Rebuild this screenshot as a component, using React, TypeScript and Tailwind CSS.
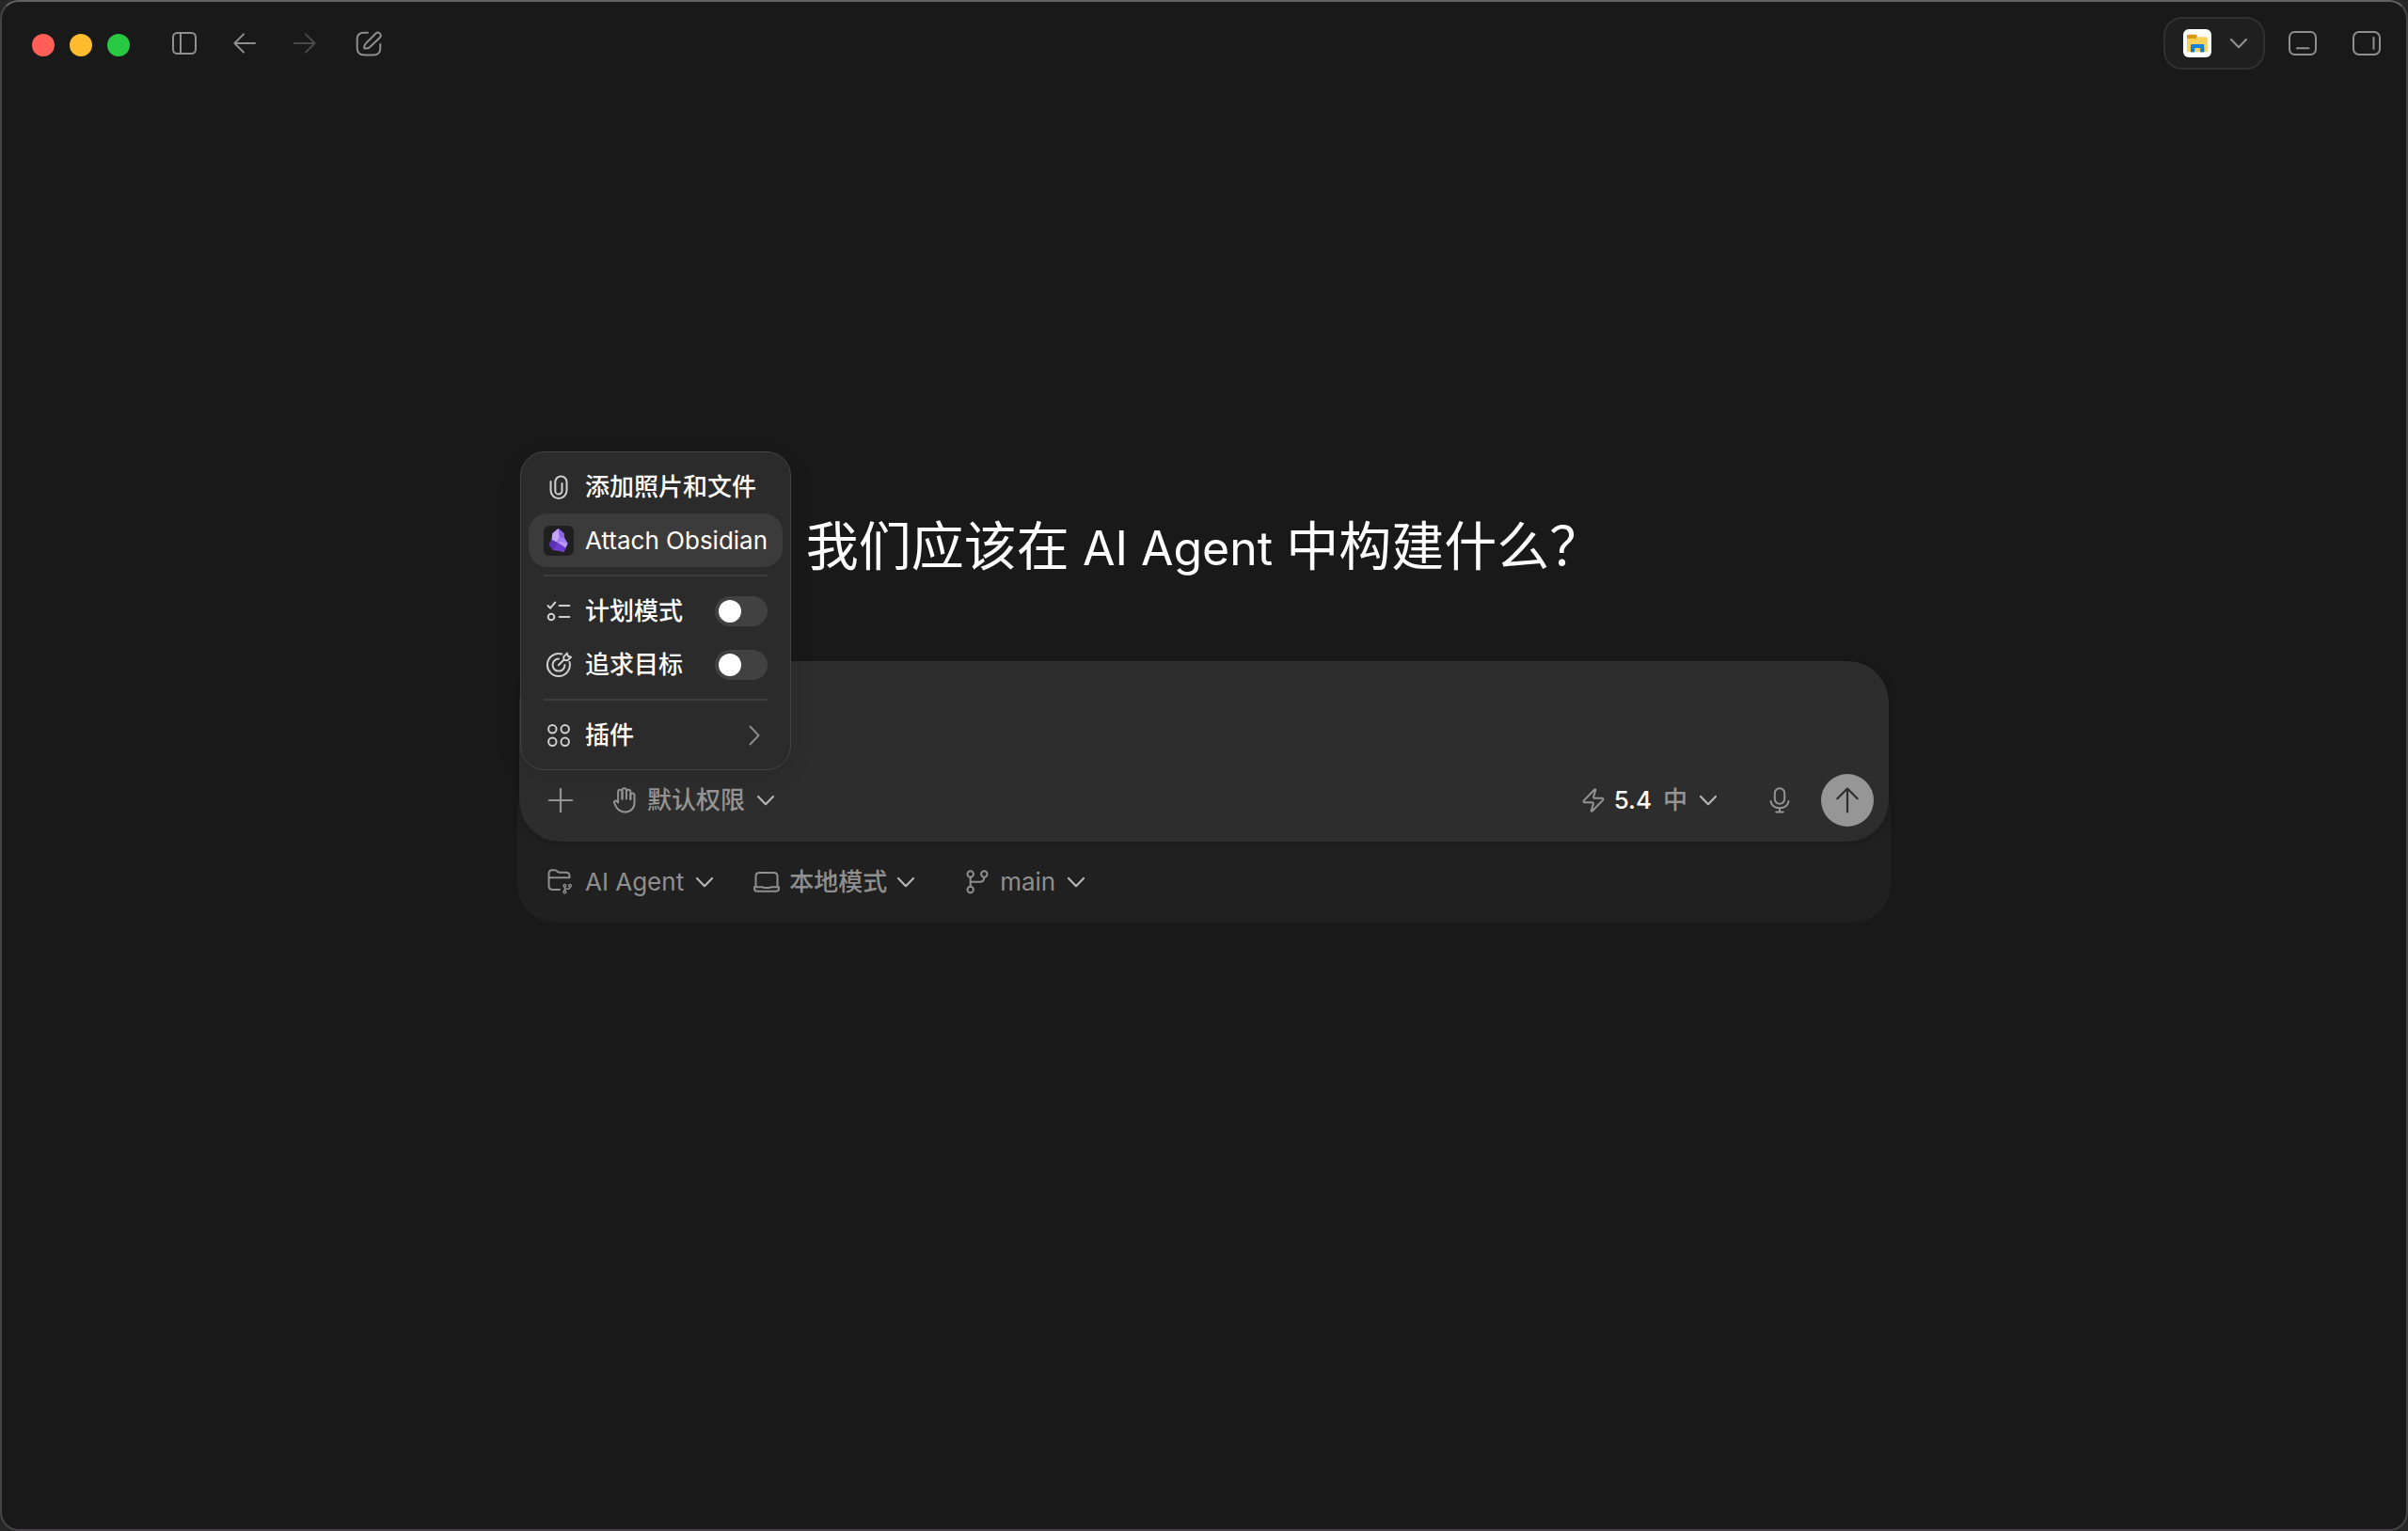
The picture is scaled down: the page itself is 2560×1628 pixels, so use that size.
import { useState } from "react";
import type { ReactNode } from "react";
import clsx from "clsx";
import { Zap } from "lucide-react";

type IconProps = {
  w: number;
  h: number;
  className?: string;
  children: ReactNode;
};

function Icon({ w, h, className, children }: IconProps) {
  return (
    <svg
      width={w}
      height={h}
      viewBox={`0 0 ${w} ${h}`}
      fill="none"
      stroke="currentColor"
      strokeWidth={2}
      strokeLinecap="round"
      strokeLinejoin="round"
      aria-hidden="true"
      className={clsx("shrink-0", className)}
    >
      {children}
    </svg>
  );
}

const ChevronDown = ({ className }: { className?: string }) => (
  <Icon w={20} h={12} className={className}>
    <path d="M2 2 10 10.2 18 2" strokeWidth={2.2} />
  </Icon>
);

const SidebarIcon = () => (
  <Icon w={26} h={24}>
    <rect x="1" y="1" width="24" height="22" rx="4.5" />
    <path d="M9 1v22" />
  </Icon>
);

const BackIcon = () => (
  <Icon w={24} h={22}>
    <path d="M23 11H1.4M11 1.4 1.4 11l9.6 9.6" />
  </Icon>
);

const ForwardIcon = () => (
  <Icon w={24} h={22}>
    <path d="M1 11h21.6M13 1.4l9.6 9.6-9.6 9.6" />
  </Icon>
);

const ComposeIcon = () => (
  <Icon w={28} h={28}>
    <path d="M13 2.8H9c-5 0-7.3 2.3-7.3 6.6v9.4c0 5.4 2.4 7.7 7.6 7.7h9.4c5.3 0 7.6-2.4 7.6-7.6V15" />
    <path d="M9.3 19.4c-.3-2 .3-3.9 1.7-5.3L21.3 3.7a3.1 3.1 0 0 1 4.5 4.3L15.3 18c-1.7 1.5-3.8 1.9-6 1.4Z" />
  </Icon>
);

const BottomPanelIcon = () => (
  <Icon w={30} h={26}>
    <rect x="1" y="1" width="28" height="24" rx="5.5" />
    <path d="M9 18.3h12.5" />
  </Icon>
);

const RightPanelIcon = () => (
  <Icon w={30} h={26}>
    <rect x="1" y="1" width="28" height="24" rx="6" />
    <path d="M22.5 7v12" />
  </Icon>
);

const ExplorerIcon = () => (
  <svg width="30" height="30" viewBox="0 0 30 30" aria-hidden="true">
    <rect width="30" height="30" rx="6" fill="#fff" />
    <path d="M4.5 8.2h20a1.3 1.3 0 0 1 1.3 1.3v14.7H4V8.7z" fill="#fdd05a" />
    <path d="M5 5.8h8.7l1.4 1.6-1.4 2.6H4V6.8a1 1 0 0 1 1-1Z" fill="#db9a10" />
    <path d="M8 17a1 1 0 0 1 1-1h12.2a1 1 0 0 1 1 1v7.2h-4V21a1 1 0 0 0-1-1h-4a1 1 0 0 0-1 1v3.2H8Z" fill="#1583dc" />
    <path d="M8 24.2V20l4.2 4.2ZM22.2 24.2V20l-4 4.2Z" fill="#0f6cc0" />
  </svg>
);

const PaperclipIcon = () => (
  <Icon w={20} h={26}>
    <path d="M1.5 7v9.5a8.5 8.5 0 0 0 17 0v-9a6.1 6.1 0 0 0-12.2 0V17a3.6 3.6 0 0 0 7.2 0V9" />
  </Icon>
);

const ObsidianIcon = () => (
  <svg width="32" height="32" viewBox="0 0 32 32" aria-hidden="true" className="shrink-0">
    <rect width="32" height="32" rx="6" fill="#1f1f20" />
    <path d="M15.5 3 9 8.3 8.6 14.5 5.5 20l4.5 6 5.5.4 6 1.5 2-4.5L25.6 19l-3.3-5.5-.6-5.5Z" fill="#7c4bdc" />
    <path d="m15.5 3-6.3 5.5-.7 8.5 5.5.5 3-5.5Z" fill="#c3a6f5" />
    <path d="m16 3 5.6 5.3.6 5.2 3.4 5.5-6.6-2.5-2-4.5Z" fill="#8f62ea" />
    <path d="m17 12-3 5.5 5-1 6.6 2.5-3.3-5.5Z" fill="#a47df2" />
    <path d="M8.5 14.8 5.5 20l4.5 6 3-3.5 1-5Z" fill="#5a32ad" />
    <path d="m14 17.5-1 5L10 26l5.5.4 6 1.5 2-4.5Z" fill="#6c3ccf" />
    <path d="m19 16.5-5 1 9.5 6 2.1-4.5Z" fill="#b896f6" />
  </svg>
);

const PlanIcon = () => (
  <Icon w={26} h={22}>
    <path d="m1.5 5 2.6 2.7 5.2-6.2M13.7 5h10.6M13.7 17h10.6" />
    <circle cx="5" cy="17" r="3.3" />
  </Icon>
);

const GoalIcon = () => (
  <Icon w={28} h={28}>
    <path d="M17.2 2.5A12 12 0 1 0 25.5 11" />
    <path d="M14 7.6a6.5 6.5 0 1 0 6.5 6.5" />
    <path d="m13.8 14.2 5.5-5.5M19.3 8.7V5.4l3.6-3.8.9 3.2 3.2.9-3.7 3.6Z" />
  </Icon>
);

const PluginsIcon = () => (
  <Icon w={24} h={24}>
    <circle cx="5.3" cy="5.3" r="4.2" />
    <circle cx="18.7" cy="5.3" r="4.2" />
    <circle cx="5.3" cy="18.7" r="4.2" />
    <circle cx="18.7" cy="18.7" r="4.2" />
  </Icon>
);

const ChevronRight = () => (
  <Icon w={12} h={22} className="text-[#8b8b8b]">
    <path d="m1.5 1.5 9 9.5-9 9.5" />
  </Icon>
);

const PlusIcon = () => (
  <Icon w={26} h={26}>
    <path d="M13 1v24M1 13h24" strokeWidth={2.2} />
  </Icon>
);

const HandIcon = () => (
  <Icon w={24} h={28}>
    <path d="M9.5 12.5V5a2.2 2.2 0 0 0-4.4 0v11.5l-.7-1C3 13.6.3 14.8 1.2 17.2c1.9 5 4.6 9.3 10.8 9.3 6.6 0 10.5-4.1 10.5-10V8.7a2.1 2.1 0 0 0-4.2 0V13" />
    <path d="M9.5 12.5V3.4a2.2 2.2 0 0 1 4.4 0v9.1M13.9 5a2.2 2.2 0 0 1 4.4 0v8" />
  </Icon>
);

const MicIcon = () => (
  <Icon w={22} h={28}>
    <rect x="5.8" y="1.3" width="10.4" height="16.4" rx="5.2" />
    <path d="M1.5 15C2.5 19.7 6.2 22.2 11 22.2s8.5-2.5 9.5-7.2M11 22.2v4M7.2 26.4h7.6" />
  </Icon>
);

const SendIcon = () => (
  <Icon w={24} h={28}>
    <path d="M12 26.5v-25M1.3 12.2 12 1.5l10.7 10.7" strokeWidth={2.2} />
  </Icon>
);

const ProjectIcon = () => (
  <Icon w={28} h={28}>
    <path d="M13 22H5.5c-3 0-4-1.2-4-4V5c0-2.5 1.2-3.7 3.6-3.7h2.5c1.5 0 2.2.6 3.1 1.5.7.7 1.4 1 2.5 1h6.3c2.7 0 4 1.3 4 3.8v1.7h-22" />
    <g strokeWidth={1.4}>
      <circle cx="18.4" cy="17.8" r="1.4" />
      <circle cx="24" cy="17.8" r="1.4" />
      <circle cx="18.4" cy="24.4" r="1.4" />
      <path d="M18.4 19.2V23M24 19.2c0 1.6-.7 2-2.2 2h-3.4" />
    </g>
  </Icon>
);

const LaptopIcon = () => (
  <Icon w={28} h={22}>
    <path d="M2.5 16V5c0-2.7 1.2-4 4-4h15c2.8 0 4 1.3 4 4v11" />
    <path d="M1 16.2h8.5c.8 0 1 .9 2 .9h5c1 0 1.2-.9 2-.9H27v1.6c0 2-.9 3-3 3H4c-2.1 0-3-1-3-3Z" />
  </Icon>
);

const BranchIcon = () => (
  <Icon w={24} h={26}>
    <circle cx="4.7" cy="4.5" r="3.2" />
    <circle cx="19.3" cy="4.5" r="3.2" />
    <circle cx="4.7" cy="21" r="3.2" />
    <path d="M4.7 7.7v10M19.3 7.7c0 3.5-1.5 5-4.5 5H4.7" />
  </Icon>
);

function TitleBar() {
  return (
    <header className="flex h-[88px] shrink-0 items-center justify-between pl-8 pr-[27px] text-[#8f8f8f]">
      <div className="flex items-center">
        <div className="flex gap-4 pt-1">
          <button type="button" aria-label="关闭" className="size-6 rounded-full bg-[#ff5f57]" />
          <button type="button" aria-label="最小化" className="size-6 rounded-full bg-[#febc2e]" />
          <button type="button" aria-label="缩放" className="size-6 rounded-full bg-[#28c840]" />
        </div>
        <nav className="ml-[26px] flex items-center">
          <button type="button" aria-label="侧边栏" className="flex size-16 items-center justify-center">
            <SidebarIcon />
          </button>
          <button type="button" aria-label="后退" className="flex size-16 items-center justify-center">
            <BackIcon />
          </button>
          <button type="button" aria-label="前进" className="flex size-16 items-center justify-center text-[#4a4a4a]">
            <ForwardIcon />
          </button>
          <button type="button" aria-label="新建" className="ml-1 flex size-16 items-center justify-center">
            <ComposeIcon />
          </button>
        </nav>
      </div>

      <div className="flex items-center">
        <button
          type="button"
          aria-label="打开方式"
          className="flex h-14 items-center gap-[19px] rounded-[20px] border-2 border-[#303030] bg-[#1f1f1f] pl-[19px] pr-4"
        >
          <ExplorerIcon />
          <ChevronDown />
        </button>
        <button type="button" aria-label="底部面板" className="ml-[25px]">
          <BottomPanelIcon />
        </button>
        <button type="button" aria-label="右侧面板" className="ml-[38px]">
          <RightPanelIcon />
        </button>
      </div>
    </header>
  );
}

type MenuRowProps = {
  icon: ReactNode;
  label: string;
  active?: boolean;
  trailing?: ReactNode;
};

function MenuRow({ icon, label, active, trailing }: MenuRowProps) {
  return (
    <button
      type="button"
      role="menuitem"
      className={clsx(
        "flex h-[57px] w-full items-center gap-3 rounded-[20px] px-4 text-left whitespace-nowrap",
        active ? "bg-[#3b3b3b] font-normal" : "font-medium"
      )}
    >
      <span className="flex w-8 shrink-0 justify-center text-[#cfcfcf]">{icon}</span>
      <span className="flex-1">{label}</span>
      {trailing}
    </button>
  );
}

function ToggleRow({ icon, label }: { icon: ReactNode; label: string }) {
  const [on, setOn] = useState(false);

  return (
    <label className="flex h-[57px] items-center gap-3 px-4 font-medium whitespace-nowrap">
      <span className="flex w-8 shrink-0 justify-center text-[#cfcfcf]">{icon}</span>
      <span className="flex-1">{label}</span>
      <input
        type="checkbox"
        role="switch"
        checked={on}
        onChange={() => setOn(!on)}
        className="flex h-8 w-14 shrink-0 appearance-none items-center rounded-full bg-[#414141] px-1 before:size-6 before:rounded-full before:bg-white before:content-[''] checked:justify-end checked:bg-[#339cff]"
      />
    </label>
  );
}

const Separator = () => <hr className="mx-4 my-2 border-0 border-t-2 border-[#3d3d3d]" />;

function AddMenu() {
  return (
    <div
      role="menu"
      className="absolute bottom-[76px] left-px w-72 rounded-[26px] border border-[#444444] bg-[#2b2b2b] p-2 text-white shadow-[0_8px_24px_rgba(0,0,0,0.1)]"
    >
      <MenuRow icon={<PaperclipIcon />} label="添加照片和文件" />
      <MenuRow icon={<ObsidianIcon />} label="Attach Obsidian" active />
      <Separator />
      <ToggleRow icon={<PlanIcon />} label="计划模式" />
      <ToggleRow icon={<GoalIcon />} label="追求目标" />
      <Separator />
      <MenuRow
        icon={<PluginsIcon />}
        label="插件"
        trailing={
          <span className="pr-2">
            <ChevronRight />
          </span>
        }
      />
    </div>
  );
}

function Composer() {
  return (
    <form
      onSubmit={(e) => e.preventDefault()}
      className="relative mx-0.5 rounded-[44px] bg-[#2d2d2d] p-4 shadow-[0_2px_8px_rgba(0,0,0,0.2)]"
    >
      <textarea
        aria-label="消息"
        className="block h-[104px] w-full resize-none bg-transparent px-3 py-2 text-white outline-none"
      />
      <div className="flex h-14 items-center justify-between text-[#949494]">
        <div className="flex items-center">
          <button type="button" aria-label="添加" className="flex size-14 items-center justify-center">
            <PlusIcon />
          </button>
          <button type="button" aria-haspopup="menu" className="ml-7 flex items-center gap-3 font-medium">
            <HandIcon />
            默认权限
            <ChevronDown className="text-[#b5b5b5]" />
          </button>
        </div>
        <div className="flex items-center">
          <button type="button" aria-haspopup="menu" className="flex items-center gap-3 font-medium">
            <Zap size={28} strokeWidth={1.7} className="-mr-1" />
            <span className="text-white">5.4</span>
            <span>中</span>
            <ChevronDown className="text-[#b5b5b5]" />
          </button>
          <button type="button" aria-label="语音输入" className="ml-[38px] flex size-14 items-center justify-center">
            <MicIcon />
          </button>
          <button
            type="submit"
            aria-label="发送"
            className="ml-4 flex size-14 items-center justify-center rounded-full bg-[#969696] text-[#2d2d2d]"
          >
            <SendIcon />
          </button>
        </div>
      </div>
      <AddMenu />
    </form>
  );
}

function ContextBar() {
  return (
    <div className="-mt-10 rounded-b-[40px] bg-[#202020] pt-10 text-[#8f8f8f]">
      <div className="flex h-[86px] items-center pl-8">
        <button type="button" aria-haspopup="menu" className="flex items-center gap-3">
          <ProjectIcon />
          AI Agent
          <ChevronDown className="text-[#b5b5b5]" />
        </button>
        <button type="button" aria-haspopup="menu" className="ml-[42px] flex items-center gap-2.5 font-medium">
          <LaptopIcon />
          本地模式
          <ChevronDown className="text-[#b5b5b5]" />
        </button>
        <button type="button" aria-haspopup="menu" className="ml-[54px] flex items-center gap-3">
          <BranchIcon />
          main
          <ChevronDown className="text-[#b5b5b5]" />
        </button>
      </div>
    </div>
  );
}

export default function App() {
  return (
    <div className="min-h-screen bg-[#262626] font-[Inter,'Noto_Sans_CJK_SC',sans-serif] text-[26px] leading-9">
      <div className="flex min-h-screen flex-col rounded-[20px] border-2 border-[#464446] border-t-[#626262] bg-[#191919]">
        <TitleBar />
        <main className="flex flex-1 flex-col items-center justify-center px-8 pb-[190px]">
          <h1 className="text-center text-[56px] leading-[72px] text-white">
            我们应该在<span className="text-[50px]"> AI Agent </span>中构建什么？
          </h1>
          <div className="mt-[84px] w-full max-w-[1460px]">
            <Composer />
            <ContextBar />
          </div>
        </main>
      </div>
    </div>
  );
}
